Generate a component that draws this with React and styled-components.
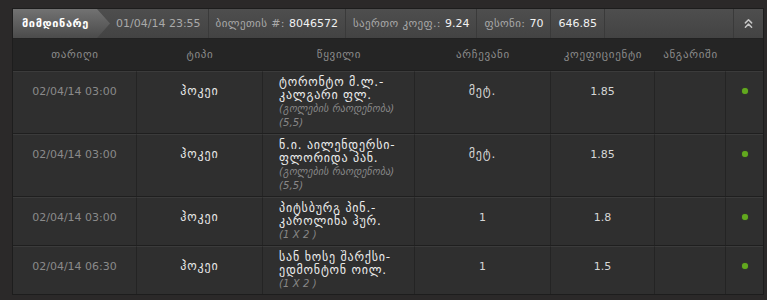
import React from 'react';
import styled, { createGlobalStyle } from 'styled-components';
import { ChevronsUp } from 'lucide-react';

const GlobalStyle = createGlobalStyle`
  html, body {
    margin: 0;
    padding: 0;
    background: #2b2929;
  }
  body {
    font-family: "DejaVu Sans", "Liberation Sans", sans-serif;
    font-size: 11px;
  }
`;

const Page = styled.div`
  padding: 8px 0 0 12px;
`;

const Panel = styled.div`
  width: 750px;
  border: 1px solid #1d1d1d;
  background: #252525;
`;

const Bar = styled.div`
  display: flex;
  height: 29px;
  background: linear-gradient(#4e4e4e, #434343);
  border-bottom: 1px solid #222;
  color: #a9a9a9;
  white-space: nowrap;
`;

const Tab = styled.div`
  display: flex;
  align-items: center;
  width: 97px;
  padding-left: 9px;
  box-sizing: border-box;
  background: linear-gradient(#727272, #4b4b4b);
  clip-path: polygon(0 0, 84px 0, 100% 50%, 84px 100%, 0 100%);
  color: #fff;
  font-weight: bold;
  letter-spacing: 0.6px;
`;

const Segment = styled.div`
  display: flex;
  align-items: center;
  padding: 0 7px 0 ${(p) => p.$pl ?? 7}px;
  border-right: 1px solid #3a3a3a;
  flex: ${(p) => (p.$grow ? 1 : 'none')};
`;

const Label = styled.span`
  letter-spacing: 0.4px;
`;

const Value = styled.span`
  color: #f2f2f2;
  margin-left: ${(p) => (p.$bare ? 0 : 4)}px;
`;

const Toggle = styled.div`
  width: 29px;
  display: flex;
  align-items: center;
  justify-content: center;
  color: #c6c6c6;
`;

const cols = '124px 126px 152px 136px 104px 71px 37px';

const HeadRow = styled.div`
  display: grid;
  grid-template-columns: ${cols};
  height: 31px;
  align-items: center;
  color: #8b8b8b;
  text-align: center;
  letter-spacing: 0.7px;
`;

const Row = styled.div`
  display: grid;
  grid-template-columns: ${cols};
  border-top: 1px solid #1f1f1f;
`;

const Cell = styled.div`
  background: #2f2f2f;
  border-top: 1px solid #3b3b3b;
  border-right: 1px solid #242424;
  padding: ${(p) => (p.$match ? '4px 2px 3px 16px' : '13px 2px 0')};
  text-align: ${(p) => (p.$match ? 'left' : 'center')};
  color: ${(p) => p.$color || '#d6d6d6'};
  font-size: ${(p) => (p.$geo ? 12 : 11)}px;
  letter-spacing: ${(p) => (p.$geo ? 0.9 : 0)}px;
  line-height: 13px;
  &:last-child {
    border-right: none;
  }
`;

const Teams = styled.div`
  color: #ececec;
  font-size: 12px;
  letter-spacing: 0.8px;
`;

const Market = styled.div`
  color: #888;
  font-style: italic;
  font-size: 10px;
  line-height: 14px;
  letter-spacing: 0.1px;
`;

const Dot = styled.span`
  display: block;
  width: 6px;
  height: 6px;
  margin: 3px auto 0;
  border-radius: 50%;
  background: #62a81f;
  box-shadow: 0 0 1px #4a8a10;
`;

const heads = ['თარიღი', 'ტიპი', 'წყვილი', 'არჩევანი', 'კოეფიციენტი', 'ანგარიში', ''];

const bets = [
  {
    date: '02/04/14 03:00',
    teams: ['ტორონტო მ.ლ.-', 'კალგარი ფლ.'],
    market: ['(გოლების რაოდენობა)', '(5,5)'],
    pick: 'მეტ.',
    odd: '1.85',
  },
  {
    date: '02/04/14 03:00',
    teams: ['ნ.ი. აილენდერსი-', 'ფლორიდა პან.'],
    market: ['(გოლების რაოდენობა)', '(5,5)'],
    pick: 'მეტ.',
    odd: '1.85',
  },
  {
    date: '02/04/14 03:00',
    teams: ['პიტსბურგ პინ.-', 'კაროლინა ჰურ.'],
    market: ['(1 X 2 )'],
    pick: '1',
    odd: '1.8',
  },
  {
    date: '02/04/14 06:30',
    teams: ['სან ხოსე შარქსი-', 'ედმონტონ ოილ.'],
    market: ['(1 X 2 )'],
    pick: '1',
    odd: '1.5',
  },
];

export default function App() {
  return (
    <Page>
      <GlobalStyle />
      <Panel>
        <Bar>
          <Tab>მიმდინარე</Tab>
          <Segment $pl={6}>01/04/14 23:55</Segment>
          <Segment>
            <Label>ბილეთის #:</Label>
            <Value>8046572</Value>
          </Segment>
          <Segment>
            <Label>საერთო კოეფ.:</Label>
            <Value>9.24</Value>
          </Segment>
          <Segment>
            <Label>ფსონი:</Label>
            <Value>70</Value>
          </Segment>
          <Segment>
            <Value $bare>646.85</Value>
          </Segment>
          <Segment $grow />
          <Toggle>
            <ChevronsUp size={15} strokeWidth={2.4} />
          </Toggle>
        </Bar>

        <HeadRow>
          {heads.map((h, i) => (
            <div key={i}>{h}</div>
          ))}
        </HeadRow>

        {bets.map((b, i) => (
          <Row key={i}>
            <Cell $color="#8a8a8a">{b.date}</Cell>
            <Cell $geo $color="#e8e8e8">ჰოკეი</Cell>
            <Cell $match>
              <Teams>
                {b.teams.map((t, j) => (
                  <div key={j}>{t}</div>
                ))}
              </Teams>
              <Market>
                {b.market.map((m, j) => (
                  <div key={j}>{m}</div>
                ))}
              </Market>
            </Cell>
            <Cell $geo={b.pick !== '1'}>{b.pick}</Cell>
            <Cell>{b.odd}</Cell>
            <Cell />
            <Cell>
              <Dot />
            </Cell>
          </Row>
        ))}
      </Panel>
    </Page>
  );
}
